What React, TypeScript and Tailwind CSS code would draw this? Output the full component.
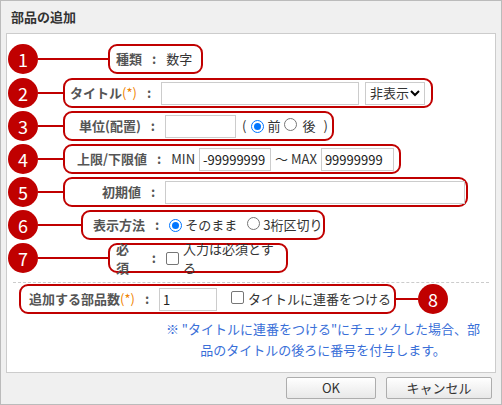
const RED = "border-[#c00000]";

function Num({ n }: { n: number }) {
  return (
    <div className="w-[30px] h-[30px] rounded-full bg-[#c00000] text-white text-[18px] flex items-center justify-center shrink-0">
      {n}
    </div>
  );
}

function Line({ w }: { w: string }) {
  return <div className={`h-[2px] bg-[#c00000] ${w}`} />;
}

function Label({ children }: { children: React.ReactNode }) {
  return <span className="font-bold text-[#555]">{children}</span>;
}

function Colon() {
  return <span className="font-bold text-[#555] mx-[10px]">:</span>;
}

function Req() {
  return <span className="text-[#f08300] font-normal">(*)</span>;
}

function Radio({ on }: { on?: boolean }) {
  return (
    <span className={`inline-block w-[13px] h-[13px] rounded-full border ${on ? "border-[#0075ff]" : "border-[#767676]"} bg-white mr-[3px] relative`}>
      {on && <span className="absolute inset-[2px] rounded-full bg-[#0075ff]" />}
    </span>
  );
}

function Check() {
  return <span className="inline-block w-[13px] h-[13px] rounded-[2px] border border-[#767676] bg-white mr-[4px]" />;
}

function Input({ w, v }: { w: string; v?: string }) {
  return (
    <div className={`${w} h-[23px] border border-[#ccc] bg-white px-[3px] text-[#222] leading-[21px] overflow-hidden whitespace-nowrap`}>
      {v}
    </div>
  );
}

export default function App() {
  return (
    <div
      className="w-[502px] h-[405px] bg-[#f0f0f0] text-[13px] text-[#333] border border-[#bbb] flex flex-col"
      style={{ fontFamily: '"Noto Sans CJK JP", "Noto Sans", sans-serif' }}
    >
      <div className="h-[32px] px-[10px] flex items-center font-bold text-[#333] text-[13px]">部品の追加</div>
      <div className="mx-[5px] h-[340px] bg-white border border-[#ccc] flex flex-col pt-[10px]">
        {/* 1 */}
        <div className="flex items-center h-[30px] ml-[1px]">
          <Num n={1} />
          <Line w="w-[70px]" />
          <div className={`border-2 ${RED} rounded-[9px] h-[30px] w-[95px] flex items-center pl-[6px]`}>
            <Label>種類</Label>
            <Colon />
            <span>数字</span>
          </div>
        </div>
        {/* 2 */}
        <div className="flex items-center h-[30px] mt-[4px] ml-[1px]">
          <Num n={2} />
          <Line w="w-[25px]" />
          <div className={`border-2 ${RED} rounded-[9px] h-[30px] w-[370px] flex items-center pl-[5px]`}>
            <Label>
              タイトル<Req />
            </Label>
            <Colon />
            <Input w="w-[198px]" />
            <div className="ml-[6px] h-[23px] w-[60px] border border-[#ccc] flex items-center justify-between px-[4px]">
              <span>非表示</span>
              <svg width="10" height="8" viewBox="0 0 10 8"><path d="M1 2l4 4 4-4" stroke="#000" strokeWidth="2" fill="none" /></svg>
            </div>
          </div>
        </div>
        {/* 3 */}
        <div className="flex items-center h-[30px] mt-[3px] ml-[1px]">
          <Num n={3} />
          <Line w="w-[25px]" />
          <div className={`border-2 ${RED} rounded-[9px] h-[30px] w-[271px] flex items-center pl-[14px]`}>
            <Label>単位(配置)</Label>
            <Colon />
            <Input w="w-[71px]" />
            <span className="ml-[6px] mr-[5px]">(</span>
            <Radio on />
            <span>前</span>
            <span className="ml-[4px]"><Radio /></span>
            <span className="ml-[2px]">後</span>
            <span className="ml-[8px]">)</span>
          </div>
        </div>
        {/* 4 */}
        <div className="flex items-center h-[30px] mt-[3px] ml-[1px]">
          <Num n={4} />
          <Line w="w-[25px]" />
          <div className={`border-2 ${RED} rounded-[9px] h-[30px] w-[338px] flex items-center pl-[12px]`}>
            <Label>上限/下限値</Label>
            <Colon />
            <span className="mr-[4px]">MIN</span>
            <Input w="w-[72px]" v="-99999999" />
            <span className="mx-[4px]">～ MAX</span>
            <Input w="w-[73px]" v="99999999" />
          </div>
        </div>
        {/* 5 */}
        <div className="flex items-center h-[30px] mt-[3px] ml-[1px]">
          <Num n={5} />
          <Line w="w-[25px]" />
          <div className={`border-2 ${RED} rounded-[9px] h-[30px] w-[405px] flex items-center pl-[37px]`}>
            <Label>初期値</Label>
            <Colon />
            <Input w="w-[300px]" />
          </div>
        </div>
        {/* 6 */}
        <div className="flex items-center h-[30px] mt-[3px] ml-[1px]">
          <Num n={6} />
          <Line w="w-[43px]" />
          <div className={`border-2 ${RED} rounded-[9px] h-[30px] w-[244px] flex items-center pl-[10px]`}>
            <Label>表示方法</Label>
            <Colon />
            <Radio on />
            <span>そのまま</span>
            <span className="ml-[10px]"><Radio /></span>
            <span>3桁区切り</span>
          </div>
        </div>
        {/* 7 */}
        <div className="flex items-center h-[30px] mt-[3px] ml-[1px]">
          <Num n={7} />
          <Line w="w-[70px]" />
          <div className={`border-2 ${RED} rounded-[9px] h-[30px] w-[180px] flex items-center pl-[6px]`}>
            <Label>必須</Label>
            <Colon />
            <Check />
            <span>入力は必須とする</span>
          </div>
        </div>
        <div className="mx-[6px] mt-[9px] border-t border-dashed border-[#ccc]" />
        {/* 8 */}
        <div className="flex items-center h-[30px] mt-[1px] ml-[12px]">
          <div className={`border-2 ${RED} rounded-[9px] h-[30px] w-[377px] flex items-center pl-[8px]`}>
            <Label>
              追加する部品数<Req />
            </Label>
            <Colon />
            <Input w="w-[58px]" v="1" />
            <span className="ml-[14px]"><Check /></span>
            <span>タイトルに連番をつける</span>
          </div>
          <Line w="w-[22px]" />
          <Num n={8} />
        </div>
        <div className="ml-[156px] w-[320px] mt-[4px] text-[#3a6fd8] leading-[21px] text-center">
          ※ "タイトルに連番をつける"にチェックした場合、部品のタイトルの後ろに番号を付与します。
        </div>
      </div>
      <div className="flex justify-end gap-[10px] pr-[9px] mt-[4px]">
        <button className="w-[90px] h-[22px] border border-[#adadad] rounded-[2px] bg-gradient-to-b from-white to-[#e8e8e8] text-[13px]">OK</button>
        <button className="w-[106px] h-[22px] border border-[#adadad] rounded-[2px] bg-gradient-to-b from-white to-[#e8e8e8] text-[13px]">キャンセル</button>
      </div>
    </div>
  );
}
